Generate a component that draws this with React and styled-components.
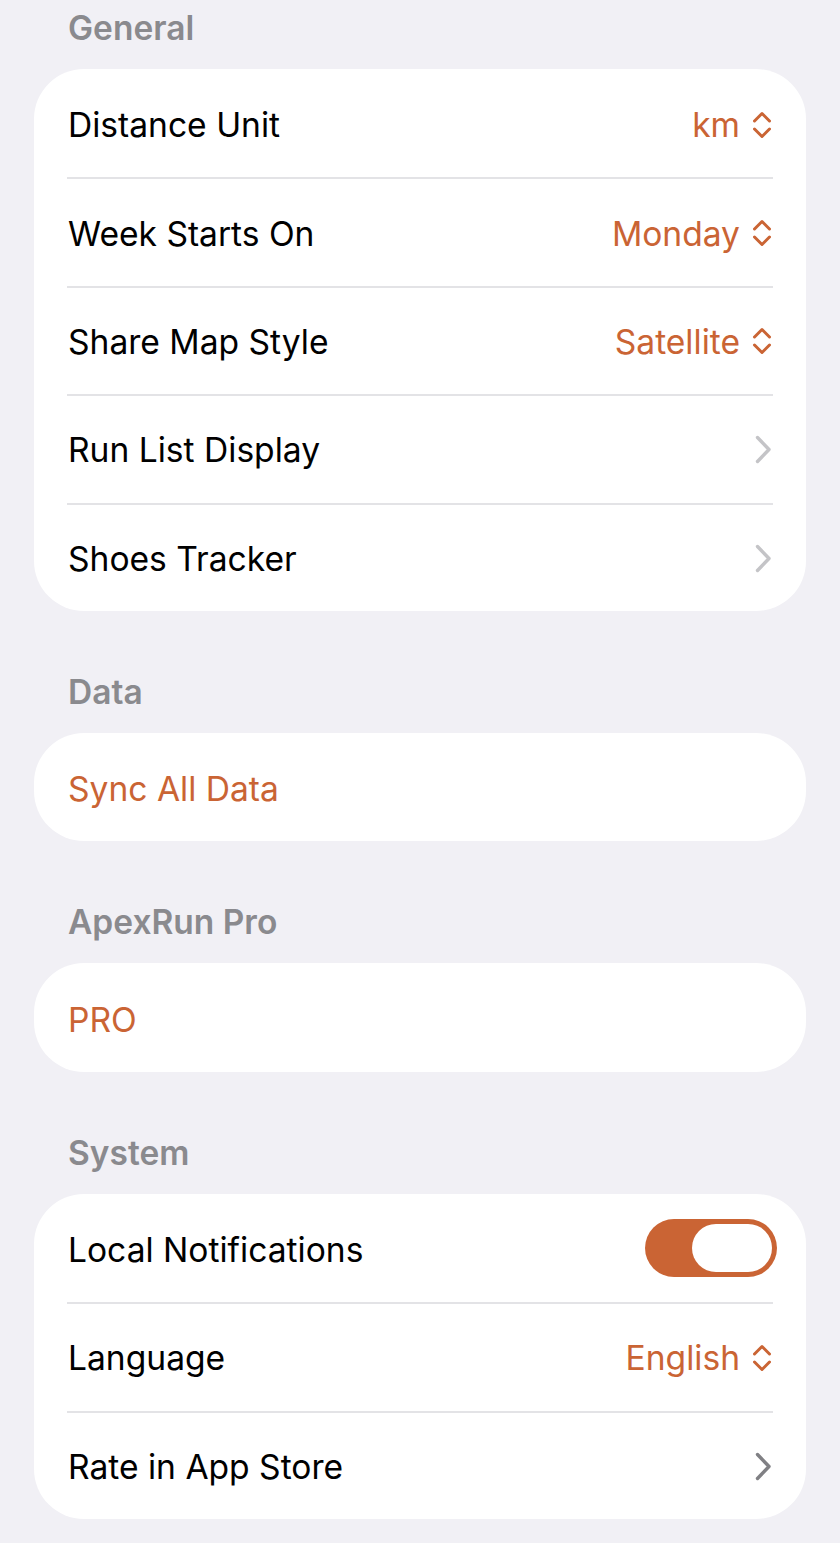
import { useState } from 'react'
import styled, { createGlobalStyle } from 'styled-components'

const GlobalStyle = createGlobalStyle`
  html, body {
    margin: 0;
    padding: 0;
    background: #f1f0f5;
  }
  body {
    font-family: Inter, "Noto Sans", "Liberation Sans", sans-serif;
    -webkit-font-smoothing: antialiased;
  }
`

const ACCENT = '#ca6434'

const Page = styled.div`
  width: 840px;
  min-height: 1543px;
  box-sizing: border-box;
  padding: 7px 34px 25px;
  display: flex;
  flex-direction: column;
  gap: 60px;
`

const Section = styled.section`
  display: flex;
  flex-direction: column;
  gap: 22px;
`

const Header = styled.h2`
  margin: 0;
  padding-left: 34px;
  height: 40px;
  line-height: 42px;
  font-size: 33.5px;
  font-weight: 600;
  color: #8a8a8e;
`

const Card = styled.div`
  background: #fff;
  border-radius: 50px;
  overflow: hidden;
  display: flex;
  flex-direction: column;
`

const Row = styled.div`
  position: relative;
  height: 108.4px;
  box-sizing: border-box;
  padding: 3px 34px 0;
  display: flex;
  align-items: center;
  justify-content: space-between;

  & + &::before {
    content: '';
    position: absolute;
    top: 0;
    left: 33px;
    right: 33px;
    height: 2px;
    background: #e3e3e6;
  }
`

const Label = styled.span`
  font-size: 33.6px;
  font-weight: 400;
  color: ${p => (p.$accent ? ACCENT : '#000')};
`

const Value = styled.div`
  display: flex;
  align-items: center;
  gap: 12px;
  font-size: 33.6px;
  color: ${ACCENT};
`

const UpDown = () => (
  <svg width="20" height="28" viewBox="0 0 20 28" fill="none" stroke={ACCENT} strokeWidth="3" strokeLinecap="round" strokeLinejoin="round">
    <path d="M2.5 10 L10 2.5 L17.5 10" />
    <path d="M2.5 18 L10 25.5 L17.5 18" />
  </svg>
)

const Chevron = ({ color }) => (
  <svg width="17" height="29" viewBox="0 0 17 29" fill="none" stroke={color} strokeWidth="3.4" strokeLinecap="round" strokeLinejoin="round">
    <path d="M2.5 2.5 L14 14.5 L2.5 26.5" />
  </svg>
)

const Track = styled.button`
  width: 132px;
  height: 58px;
  margin: -3px -5px 0 0;
  border: none;
  border-radius: 29px;
  padding: 5px;
  background: ${p => (p.$on ? ACCENT : '#e4e4e8')};
  display: flex;
  justify-content: ${p => (p.$on ? 'flex-end' : 'flex-start')};
  cursor: pointer;
`

const Knob = styled.span`
  width: 80px;
  height: 48px;
  border-radius: 24px;
  background: #fff;
`

const Toggle = () => {
  const [on, setOn] = useState(true)
  return (
    <Track $on={on} onClick={() => setOn(!on)}>
      <Knob />
    </Track>
  )
}

const Picker = ({ value }) => (
  <Value>
    {value}
    <UpDown />
  </Value>
)

export default function App() {
  return (
    <>
      <GlobalStyle />
      <Page>
        <Section>
          <Header>General</Header>
          <Card>
            <Row><Label>Distance Unit</Label><Picker value="km" /></Row>
            <Row><Label>Week Starts On</Label><Picker value="Monday" /></Row>
            <Row><Label>Share Map Style</Label><Picker value="Satellite" /></Row>
            <Row><Label>Run List Display</Label><Chevron color="#c4c4c7" /></Row>
            <Row><Label>Shoes Tracker</Label><Chevron color="#c4c4c7" /></Row>
          </Card>
        </Section>
        <Section>
          <Header>Data</Header>
          <Card>
            <Row><Label $accent>Sync All Data</Label></Row>
          </Card>
        </Section>
        <Section>
          <Header>ApexRun Pro</Header>
          <Card>
            <Row><Label $accent>PRO</Label></Row>
          </Card>
        </Section>
        <Section>
          <Header>System</Header>
          <Card>
            <Row><Label>Local Notifications</Label><Toggle /></Row>
            <Row><Label>Language</Label><Picker value="English" /></Row>
            <Row><Label>Rate in App Store</Label><Chevron color="#808084" /></Row>
          </Card>
        </Section>
      </Page>
    </>
  )
}
